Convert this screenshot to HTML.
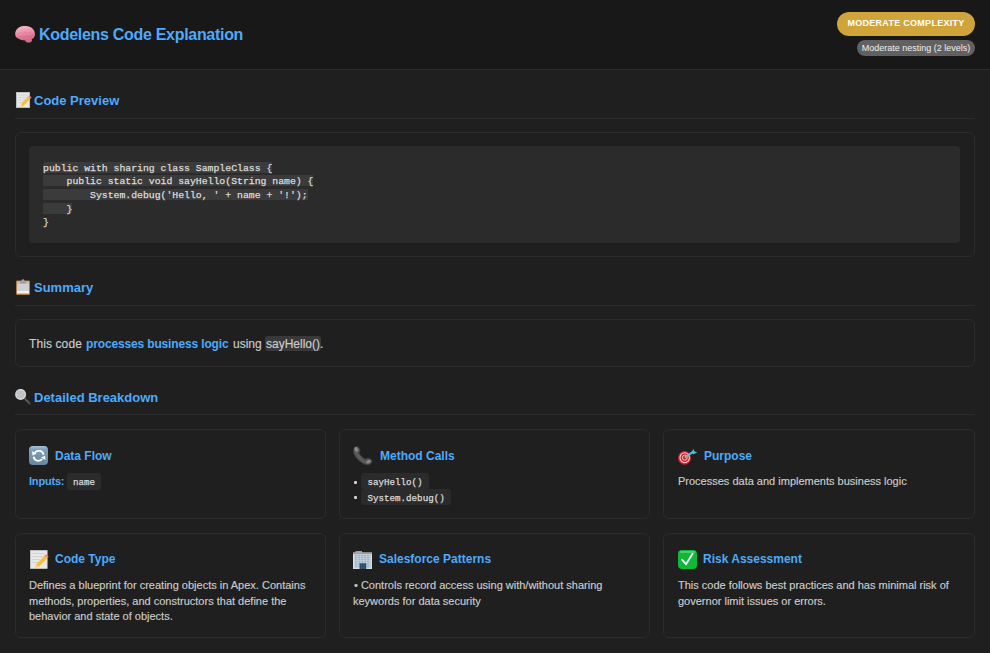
<!DOCTYPE html>
<html><head><meta charset="utf-8">
<style>
*{margin:0;padding:0;box-sizing:border-box}
html,body{width:990px;height:653px;overflow:hidden;background:#1f1f1f}
body{position:relative;font-family:"Liberation Sans",sans-serif;color:#cccccc}
.a{position:absolute;white-space:pre}
.hdr{position:absolute;left:0;top:0;width:990px;height:70px;background:#181818;border-bottom:1px solid #2b2b2b}
.title{left:39px;top:27px;font-size:16px;line-height:16px;font-weight:bold;color:#4daafc;letter-spacing:-0.3px}
.badge{position:absolute;left:837px;top:12px;width:138px;height:24px;border-radius:12px;background:#cfa43a;color:#fff;font-weight:bold;font-size:9px;line-height:22px;letter-spacing:0.28px;text-align:center}
.pill{position:absolute;left:857px;top:40px;width:118px;height:16px;border-radius:8px;background:#616161;color:#f0f0f0;font-size:9px;line-height:16px;text-align:center}
.sh{left:34px;font-size:13px;line-height:13px;font-weight:bold;color:#4daafc}
.sep{position:absolute;left:15px;width:960px;height:1px;background:#2b2b2b}
.card{position:absolute;border:1px solid #2b2b2b;border-radius:6px}
.pre{position:absolute;left:29px;top:146px;width:931px;height:97px;background:#2b2b2b;border-radius:4px}
.cl{position:absolute;left:43px;font-family:"Liberation Mono",monospace;font-size:9.8px;line-height:11px;height:11px;color:#dcdcdc;-webkit-text-stroke:0.25px #dcdcdc;white-space:pre}
.cl span{display:inline-block;height:11px;line-height:13px;background:#3b3b3b;vertical-align:top}
.ch{font-size:12px;line-height:12px;font-weight:bold;color:#4daafc}
.bt{font-size:11px;line-height:15.5px;color:#cccccc;-webkit-text-stroke:0.15px #cccccc}
.code{position:absolute;height:16px;background:#2b2b2b;border-radius:3px;font-family:"Liberation Mono",monospace;font-size:9.2px;line-height:20px;color:#dcdcdc;-webkit-text-stroke:0.25px #dcdcdc;padding:0 6.5px;white-space:pre}
.ico{position:absolute}
</style></head><body>
<div class="hdr"></div>
<!-- brain -->
<svg class="ico" style="left:15px;top:26px" width="21" height="17" viewBox="0 0 21 17">
<defs><linearGradient id="gbr" x1="0" y1="0" x2="0.3" y2="1"><stop offset="0" stop-color="#f9c2d2"/><stop offset="0.45" stop-color="#ee98af"/><stop offset="1" stop-color="#d66d8a"/></linearGradient></defs>
<ellipse cx="13.6" cy="14.2" rx="3.3" ry="2.3" fill="#d56c89"/>
<path d="M0.3 9 C-0.5 4.5 3.5 0 8.5 0 C12.5 0 15.5 0.5 17.5 2.5 C19.5 4.3 20.3 6.8 19.8 9.5 C19.4 11.5 18.5 12.5 17 13 C15.5 13.5 13 14.5 10.5 14.5 C7 14.5 3.8 13.2 2 11.8 C1 11 0.5 10 0.3 9 Z" fill="url(#gbr)"/>
<path d="M2.5 7.5 C4.5 6.5 6 8 8.5 7 C10.5 6.2 12.5 7.5 15.5 6.5" stroke="#d77e97" stroke-width="0.6" fill="none"/>
<path d="M3 11 C5.5 10 8 11.5 11 10.5 C13.5 9.7 15.5 11 18 10" stroke="#c9647f" stroke-width="0.6" fill="none"/>
<path d="M5.5 3.5 C6.5 4.7 8.5 4.5 10 3.5 M11.5 2.5 C12.5 4 14.5 4 16.5 3.5" stroke="#e596ab" stroke-width="0.5" fill="none"/>
</svg>
<div class="a title">Kodelens Code Explanation</div>
<div class="badge">MODERATE COMPLEXITY</div>
<div class="pill">Moderate nesting (2 levels)</div>

<!-- Code Preview -->
<svg class="ico" style="left:16px;top:92px" width="16" height="16" viewBox="0 0 16 16">
<rect x="0.3" y="0.3" width="13.4" height="15.4" fill="#e8e8e8" stroke="#c6c6c6" stroke-width="0.6"/>
<path d="M2 3h10M2 5.5h10M2 8h7M2 10.5h5" stroke="#c8c8c8" stroke-width="0.6"/>
<path d="M4 15 L5 12 L12.2 4.6 L14.4 6.8 L7.2 14.2 Z" fill="#f4c03f"/>
<path d="M4 15 L5 12 L7.2 14.2 Z" fill="#f1dcaa"/>
<path d="M12.2 4.6 L13.4 3.4 L15.6 5.6 L14.4 6.8 Z" fill="#e9838f"/>
</svg>
<div class="a sh" style="top:94px">Code Preview</div>
<div class="sep" style="top:118px"></div>
<div class="card" style="left:15px;top:132px;width:960px;height:125px"></div>
<div class="pre"></div>
<div class="cl" style="top:162px"><span style="border-radius:3px 0 0 0">public with sharing class SampleClass {</span></div>
<div class="cl" style="top:175.4px"><span>    public static void sayHello(String name) {</span></div>
<div class="cl" style="top:189.4px"><span>        System.debug('Hello, ' + name + '!');</span></div>
<div class="cl" style="top:203.1px"><span style="border-radius:0 0 3px 0">    }</span></div>
<div class="cl" style="top:216.8px">}</div>

<!-- Summary -->
<svg class="ico" style="left:16px;top:279px" width="14" height="16" viewBox="0 0 14 16">
<rect x="0" y="1.5" width="14" height="14.5" rx="1" fill="#a87b48"/>
<rect x="1" y="2.5" width="12" height="12" fill="#d0d0d0"/>
<rect x="1" y="12" width="12" height="2.3" fill="#f3f3f3"/>
<rect x="1" y="2.5" width="12" height="2" fill="#b9b9b9"/>
<path d="M4 4.5 L5 1.8 L9 1.8 L10 4.5 Z" fill="#9c9c9c"/>
<circle cx="7" cy="1.4" r="1.2" fill="#a9a9a9"/>
</svg>
<div class="a sh" style="top:281px">Summary</div>
<div class="sep" style="top:305px"></div>
<div class="card" style="left:15px;top:319px;width:960px;height:48px"></div>
<div class="a" style="left:29px;top:338px;font-size:12px;line-height:12px;color:#cccccc;letter-spacing:0.1px;-webkit-text-stroke:0.15px #cccccc">This code</div>
<div class="a" style="left:86px;top:338px;font-size:12px;line-height:12px;font-weight:bold;color:#4daafc;letter-spacing:-0.15px">processes business logic</div>
<div class="a" style="left:233px;top:338px;font-size:12px;line-height:12px;color:#cccccc;-webkit-text-stroke:0.15px #cccccc">using</div>
<div class="a" style="left:265px;top:336px;width:56px;height:15px;background:#393939;border-radius:3px"></div>
<div class="a" style="left:266px;top:338px;font-size:12px;line-height:12px;color:#cccccc;-webkit-text-stroke:0.15px #cccccc">sayHello().</div>

<!-- Detailed Breakdown -->
<svg class="ico" style="left:15px;top:389px" width="16" height="16" viewBox="0 0 16 16">
<line x1="9.6" y1="9.4" x2="14.6" y2="14.4" stroke="#3c3c3c" stroke-width="2.8" stroke-linecap="round"/>
<line x1="10.4" y1="10.2" x2="14" y2="13.8" stroke="#6e8494" stroke-width="0.9" stroke-linecap="round"/>
<circle cx="5.6" cy="5.4" r="5.5" fill="#d6d6d6"/>
<circle cx="5.6" cy="5.4" r="3.9" fill="#c3c3c3"/>
<path d="M1.2 4.5 A4.6 4.6 0 0 1 4.5 0.9" stroke="#a8c8e0" stroke-width="0.8" fill="none"/>
</svg>
<div class="a sh" style="top:391px">Detailed Breakdown</div>
<div class="sep" style="top:414px"></div>

<!-- grid row 1 -->
<div class="card" style="left:15px;top:429px;width:311px;height:90px"></div>
<div class="card" style="left:339px;top:429px;width:311px;height:90px"></div>
<div class="card" style="left:663px;top:429px;width:312px;height:90px"></div>
<div class="card" style="left:15px;top:533px;width:311px;height:105px"></div>
<div class="card" style="left:339px;top:533px;width:311px;height:105px"></div>
<div class="card" style="left:663px;top:533px;width:312px;height:105px"></div>

<!-- Data Flow -->
<svg class="ico" style="left:29px;top:446px" width="19" height="19" viewBox="0 0 19 19">
<defs><linearGradient id="gb" x1="0" y1="0" x2="0" y2="1"><stop offset="0" stop-color="#aac3d7"/><stop offset="0.2" stop-color="#7f9eb7"/><stop offset="1" stop-color="#6786a0"/></linearGradient></defs>
<rect x="0" y="0" width="19" height="19" rx="4" fill="url(#gb)"/>
<path d="M14.6 8.8 A5 5 0 0 0 5.9 6.6" stroke="#fff" stroke-width="1.8" fill="none"/>
<path d="M3.0 5.3 L7.6 7.6 L3.6 9.4 Z" fill="#fff"/>
<path d="M4.6 10.8 A5 5 0 0 0 13.3 13.0" stroke="#fff" stroke-width="1.8" fill="none"/>
<path d="M16.6 13.9 L12.0 11.6 L16.0 9.8 Z" fill="#fff"/>
</svg>
<div class="a ch" style="left:55px;top:450px">Data Flow</div>
<div class="a" style="left:29px;top:476px;font-size:11px;line-height:11px;font-weight:bold;color:#4daafc;letter-spacing:-0.2px">Inputs:</div>
<div class="code" style="left:67px;top:473px;height:17px;line-height:20px;padding:0 6px">name</div>

<!-- Method Calls -->
<svg class="ico" style="left:351.8px;top:445.3px" width="21" height="21" viewBox="0 0 19 19">
<path d="M1.5 4 C0.5 7 3 11 7 14.5 C10.5 17.5 14 18.8 16.5 17.2 C18.6 15.8 18.4 13.6 16.6 12.6 C15 11.7 13.4 11.8 12.3 13 C10.2 12.2 7.2 9.2 6.1 7.1 C7.4 6.1 7.5 4.3 6.5 2.7 C5.3 0.6 2.6 0.6 1.5 4 Z" fill="#5a5a5a" stroke="#3b3b3b" stroke-width="0.9"/>
<ellipse cx="3.8" cy="4" rx="1.4" ry="2.2" fill="#8e8e8e" transform="rotate(-25 3.8 4)"/>
<ellipse cx="15" cy="15.2" rx="2.2" ry="1.3" fill="#8a8a8a" transform="rotate(-25 15 15.2)"/>
</svg>
<div class="a ch" style="left:380px;top:450px">Method Calls</div>
<div style="position:absolute;left:354px;top:480.8px;width:3px;height:2.8px;background:#d0d0d0;border-radius:1px"></div>
<div style="position:absolute;left:354px;top:495.8px;width:3px;height:2.8px;background:#d0d0d0;border-radius:1px"></div>
<div class="code" style="left:361px;top:473px;height:16px">sayHello()</div>
<div class="code" style="left:361px;top:489px;height:16px">System.debug()</div>

<!-- Purpose -->
<svg class="ico" style="left:678px;top:448px" width="20" height="17" viewBox="0 0 20 17">
<ellipse cx="6.5" cy="9.9" rx="6.5" ry="6.9" fill="#d91c29"/>
<ellipse cx="6.7" cy="9.7" rx="4.7" ry="5.0" fill="none" stroke="#f6dada" stroke-width="1.1"/>
<ellipse cx="6.8" cy="9.6" rx="2.4" ry="2.6" fill="none" stroke="#f3d0d0" stroke-width="1"/>
<circle cx="6.8" cy="9.6" r="1" fill="#c81d28"/>
<path d="M7.5 9 L14.6 4.2" stroke="#38cde6" stroke-width="2" stroke-linecap="round"/>
<path d="M13.6 4.8 L15.3 0.8 L16.4 3.3 L19.2 4.6 L15.4 6.2 Z" fill="#3fc4d2"/>
<circle cx="7.6" cy="9" r="0.9" fill="#e8a040"/>
</svg>
<div class="a ch" style="left:704px;top:450px">Purpose</div>
<div class="a bt" style="left:678px;top:474.3px">Processes data and implements business logic</div>

<!-- Code Type -->
<svg class="ico" style="left:30px;top:550px" width="19" height="19" viewBox="0 0 19 19">
<rect x="0.3" y="0.3" width="16.9" height="18.4" fill="#e8e8e8" stroke="#c6c6c6" stroke-width="0.6"/>
<path d="M2.2 3.5h12.5M2.2 6.5h12.5M2.2 9.5h8M2.2 12.5h6" stroke="#c8c8c8" stroke-width="0.7"/>
<path d="M4.8 18 L6 14.4 L14.7 5.6 L17.3 8.2 L8.6 17 Z" fill="#f4c03f"/>
<path d="M4.8 18 L6 14.4 L8.6 17 Z" fill="#f1dcaa"/>
<path d="M14.7 5.6 L16.1 4.2 L18.7 6.8 L17.3 8.2 Z" fill="#e9838f"/>
</svg>
<div class="a ch" style="left:55px;top:552.5px">Code Type</div>
<div class="a bt" style="left:29px;top:578.3px">Defines a blueprint for creating objects in Apex. Contains
methods, properties, and constructors that define the
behavior and state of objects.</div>

<!-- Salesforce Patterns -->
<svg class="ico" style="left:353px;top:551px" width="19" height="18" viewBox="0 0 19 18">
<defs><pattern id="win" x="1.6" y="3.6" width="3" height="2.1" patternUnits="userSpaceOnUse"><rect x="0" y="0" width="3" height="2.1" fill="#cbd7e0"/><rect x="0.6" y="0.4" width="1.6" height="1.2" fill="#6f93b3"/></pattern></defs>
<rect x="2.5" y="0" width="6.5" height="2" fill="#a0a0a0"/>
<rect x="0" y="1.5" width="19" height="16.5" fill="#d8dde2"/>
<rect x="0" y="1.5" width="19" height="1.6" fill="#9c9c9c"/>
<rect x="1.4" y="3.4" width="16.2" height="13.4" fill="url(#win)"/>
<rect x="6.6" y="12.2" width="6.6" height="5.8" fill="#2b4a63"/>
<rect x="6.6" y="12" width="6.6" height="0.8" fill="#8a6a50"/>
<path d="M8.3 13v5M9.9 13v5M11.5 13v5" stroke="#4a6f8c" stroke-width="0.5"/>
</svg>
<div class="a ch" style="left:379px;top:552.5px">Salesforce Patterns</div>
<div class="a bt" style="left:353px;top:578.3px"><span style="padding-left:1px">•</span> Controls record access using with/without sharing
keywords for data security</div>

<!-- Risk Assessment -->
<svg class="ico" style="left:678px;top:550px" width="19" height="19" viewBox="0 0 19 19">
<rect x="0" y="0" width="19" height="19" rx="4" fill="#0db83b"/>
<rect x="1.5" y="1" width="16" height="2" rx="1" fill="#6fd98c" opacity="0.6"/>
<path d="M4.2 9.8 L8 14.2 L14.6 3.8" stroke="#fff" stroke-width="1.8" fill="none" stroke-linecap="round" stroke-linejoin="round"/>
</svg>
<div class="a ch" style="left:703px;top:552.5px">Risk Assessment</div>
<div class="a bt" style="left:678px;top:578.3px">This code follows best practices and has minimal risk of
governor limit issues or errors.</div>
</body></html>
